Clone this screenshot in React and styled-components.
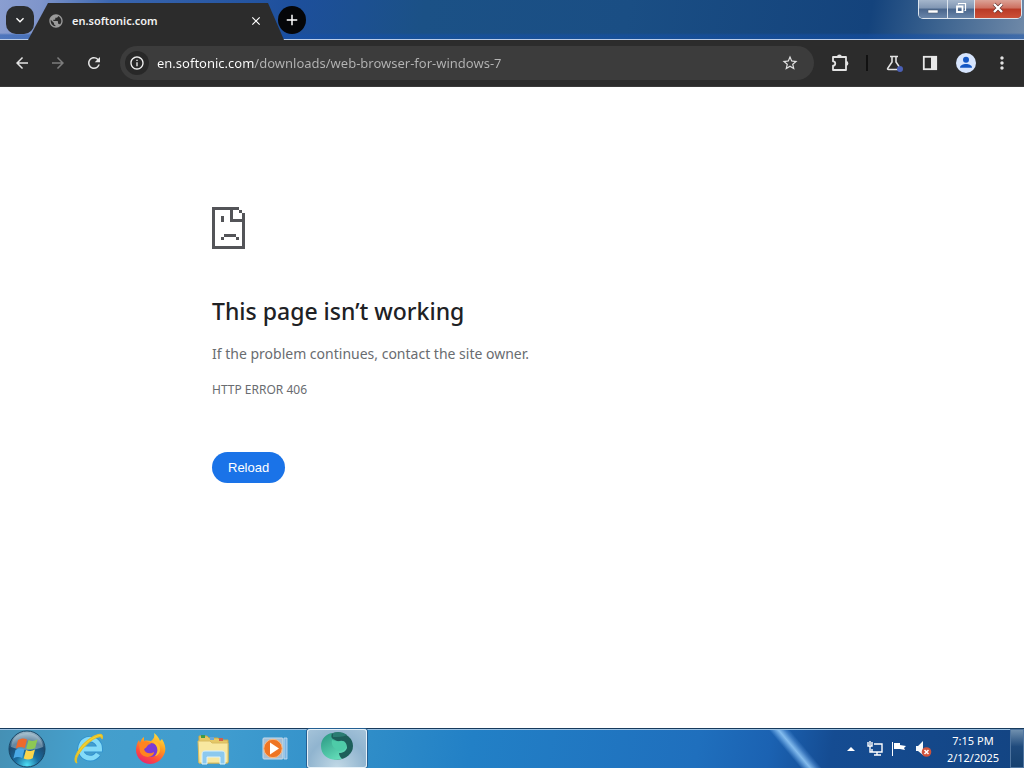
import React from "react";
import styled, { createGlobalStyle } from "styled-components";
import {
  MdArrowBack,
  MdArrowForward,
  MdRefresh,
  MdInfoOutline,
  MdStarBorder,
  MdMoreVert,
  MdClose,
  MdAdd,
  MdKeyboardArrowDown,
  MdPublic,
} from "react-icons/md";

const uiFont = '"Noto Sans", "Open Sans", sans-serif';

const GlobalStyle = createGlobalStyle`
  *, *::before, *::after { box-sizing: border-box; }
  body { margin: 0; font-family: ${uiFont}; }
  button { font: inherit; border: 0; padding: 0; cursor: pointer; }
  svg { display: block; flex: none; }
`;

const Screen = styled.div`
  min-height: 100vh;
  display: flex;
  flex-direction: column;
  background: #fff;
`;

const TitleBar = styled.header`
  display: flex;
  align-items: flex-start;
  height: 40px;
  background:
    linear-gradient(#b9cce8, #b9cce8) bottom / 100% 1px no-repeat,
    linear-gradient(to bottom, transparent 33px, rgba(20, 80, 170, 0.5) 35px),
    linear-gradient(100deg, #8a9ed0 0, #7f95cb 40px, #3a66b0 110px, #1d4f9c 290px, #1b5186 420px, #1a4e84 620px, #14437c 860px, #3d6490 930px, #6f89a8 100%);
`;

const TabSearch = styled.button`
  display: grid;
  place-items: center;
  width: 28px;
  height: 28px;
  margin: 6px 0 0 6px;
  border-radius: 10px;
  background: #2b2d2f;
  color: #fff;
`;

const Tab = styled.div`
  display: flex;
  align-items: center;
  gap: 8px;
  width: 256px;
  height: 37px;
  margin: 3px 0 0 -6px;
  padding: 0 20px 2px;
  background: #2c2c2c;
  color: #f2f2f2;
  font-size: 11px;
  font-weight: 600;
  line-height: 16px;
  clip-path: polygon(20px 0, 240px 0, 256px 100%, 0 100%);
`;

const TabTitle = styled.span`
  flex: 1;
`;

const TabClose = styled.button`
  display: grid;
  place-items: center;
  width: 16px;
  height: 16px;
  background: none;
  color: #fff;
`;

const NewTab = styled.button`
  display: grid;
  place-items: center;
  width: 28px;
  height: 28px;
  margin: 6px 0 0 -6px;
  border-radius: 50%;
  background: #050608;
  color: #fff;
`;

const WindowControls = styled.div`
  display: flex;
  margin: 0 2px 0 auto;
  height: 19px;
  border: 1px solid #dde5ee;
  border-top: 0;
  border-radius: 0 0 5px 5px;
  overflow: hidden;
`;

const WindowButton = styled.button`
  display: grid;
  place-items: center;
  width: ${(p) => p.$width}px;
  padding-bottom: 2px;
  background: ${(p) =>
    p.$close
      ? "linear-gradient(#dca296 0, #cd6f5f 45%, #b93a26 50%, #cc5038 100%)"
      : "linear-gradient(#a5b6cc 0, #8096b3 45%, #49658c 50%, #6a86aa 100%)"};

  & + & {
    border-left: 1px solid #dde5ee;
  }
`;

const Toolbar = styled.nav`
  display: flex;
  align-items: center;
  height: 47px;
  padding: 0 4px;
  background: #2c2c2c;
  border-bottom: 1px solid #3a3a3a;
  color: #e3e3e3;
`;

const ToolButton = styled.button`
  display: grid;
  place-items: center;
  width: 36px;
  height: 34px;
  background: none;
  color: ${(p) => (p.disabled ? "#7c7c7c" : "inherit")};
`;

const Omnibox = styled.form`
  display: flex;
  align-items: center;
  flex: 1;
  height: 34px;
  margin: 0 8px;
  padding: 0 6px 0 5px;
  border-radius: 17px;
  background: #3c3c3c;
`;

const SiteInfo = styled.button`
  display: grid;
  place-items: center;
  width: 24px;
  height: 24px;
  border-radius: 50%;
  background: #282828;
  color: #f1f1f1;
`;

const Address = styled.input`
  flex: 1;
  min-width: 0;
  height: 24px;
  margin-left: 8px;
  padding: 0;
  border: 0;
  outline: 0;
  font-family: ${uiFont};
  font-size: 13px;
  background: linear-gradient(90deg, #fff 97px, #b4b4b4 97px);
  background-clip: text;
  color: transparent;
`;

const ToolDivider = styled.span`
  width: 2px;
  height: 16px;
  margin: 0 8px;
  background: #111;
`;

const Page = styled.main`
  flex: 1;
  padding: 120px 24px 40px;
`;

const ErrorBox = styled.section`
  max-width: 600px;
  margin: 0 auto;
`;

const Heading = styled.h1`
  margin: 46px 0 16px;
  font-size: 23px;
  font-weight: 500;
  line-height: 32px;
  color: #202124;
`;

const Message = styled.p`
  margin: 0 0 15px;
  font-size: 14px;
  line-height: 22px;
  color: #696c70;
`;

const ErrorCode = styled.div`
  font-size: 12px;
  line-height: 20px;
  color: #696c70;
`;

const Reload = styled.button`
  height: 31px;
  margin-top: 52px;
  padding: 0 16px;
  border-radius: 16px;
  background: #1a73e8;
  color: #fff;
  && {
    font: 500 13px/20px "Liberation Sans", Arial, sans-serif;
  }
`;

const Taskbar = styled.footer`
  display: flex;
  align-items: stretch;
  height: 40px;
  border-top: 1px solid #173a5c;
  color: #fff;
  background:
    linear-gradient(#9dc3e4, #9dc3e4) top / 100% 1px no-repeat,
    linear-gradient(50deg, transparent 40%, rgba(130, 190, 245, 0.5) 45%, rgba(150, 205, 250, 0.85) 50%, rgba(110, 170, 235, 0.4) 57%, transparent 62%) right 198px top / 64px 100% no-repeat,
    linear-gradient(100deg, #4590b4 0, #459fcc 8%, #3f9ccf 22%, #2f8dc8 36%, #2280c6 46%, #1f6fbd 68%, #1b62b2 75%, #154c92 81%, #134482 100%);
`;

const TaskButton = styled.button`
  display: grid;
  place-items: center;
  width: ${(p) => (p.$start ? 54 : 60)}px;
  margin-right: ${(p) => (p.$start ? 5 : 2)}px;
  padding-bottom: ${(p) => (p.$active ? 4 : 0)}px;
  border-radius: 3px;
  background: ${(p) =>
    p.$active
      ? "radial-gradient(circle at 50% 100%, #c2d9e6, #90b4cf 60%, #a6c4da)"
      : "none"};
  box-shadow: ${(p) =>
    p.$active ? "inset 0 0 0 1px #e6f1f8, 0 0 0 1px #245f92" : "none"};
`;

const Tray = styled.div`
  display: flex;
  align-items: center;
  margin-left: auto;
`;

const TrayButton = styled.button`
  display: grid;
  place-items: center;
  width: 24px;
  height: 24px;
  background: none;
`;

const Clock = styled.time`
  display: flex;
  flex-direction: column;
  width: 75px;
  padding-left: 1px;
  font-size: 11px;
  line-height: 17px;
  text-align: center;
`;

const ShowDesktop = styled.button`
  width: 14px;
  align-self: stretch;
  background: linear-gradient(#6f8fae, #1f4a7c 45%, #16406f);
  && {
    border: 1px solid #4f75a0;
  }
`;

const Puzzle = () => (
  <svg width="20" height="20" viewBox="0 0 20 20">
    <path d="M3 4h13v13H3v-4.300c3 0 3-4.400 0-4.400z" fill="none" stroke="#e3e3e3" strokeWidth="1.800" strokeLinejoin="round" />
    <path d="M7 4a2.400 2.400 0 0 1 4.800 0zM16 8a2.400 2.400 0 0 1 0 4.800z" fill="#e3e3e3" />
  </svg>
);

const Flask = () => (
  <svg width="20" height="20" viewBox="0 0 20 20">
    <path d="M6 3.500h8M8 4v5L3.700 15.300c-.4.7 0 1.200.7 1.200h11.200c.7 0 1.100-.5.7-1.200L12 9V4" fill="none" stroke="#e3e3e3" strokeWidth="1.600" />
    <circle cx="16" cy="16" r="3" fill="#4a5fb5" />
  </svg>
);

const SidePanel = () => (
  <svg width="16" height="16" viewBox="0 0 16 16">
    <rect x="1.800" y="1.800" width="12.400" height="12.400" fill="none" stroke="#e8e8e8" strokeWidth="1.800" />
    <path d="M9 2h5v12H9z" fill="#e8e8e8" />
  </svg>
);

const Avatar = () => (
  <svg width="20" height="20" viewBox="0 0 20 20">
    <circle cx="10" cy="10" r="10" fill="#d7e5fd" />
    <circle cx="10" cy="6.800" r="3" fill="#1457c4" />
    <path d="M4 14.800c0-5 12-5 12 0z" fill="#1457c4" />
  </svg>
);

const SadPage = () => (
  <svg width="33" height="42" viewBox="0 0 11 14" fill="#535458" shapeRendering="crispEdges" aria-hidden="true">
    <path d="M0 0h9v1H1v12h9V5H6V1h1v3h3V2h1v12H0zM9 1h1v1H9zM3 3h1v2H3zM4 9h4v1H4zM3 10h1v1H3zM8 10h1v1H8z" />
  </svg>
);

const StartOrb = () => (
  <svg width="38" height="38" viewBox="0 0 38 38">
    <defs>
      <radialGradient id="orb" cx=".5" cy=".95" r=".95">
        <stop offset="0" stopColor="#4fe0f5" />
        <stop offset=".35" stopColor="#1a6c9f" />
        <stop offset=".7" stopColor="#1d4a70" />
        <stop offset="1" stopColor="#a8c3d2" />
      </radialGradient>
    </defs>
    <circle cx="19" cy="19" r="18" fill="url(#orb)" stroke="#194665" />
    <path d="M3 17C4 6 12 3 19 3s15 4 16 14c-9 4-22 4-32 0z" fill="#d9e9ef" opacity=".38" />
    <path d="M10 10c3.500-2 6-2 9-.6l-2.200 8.500c-3.300-1.400-6-1.200-9 .5z" fill="#ed692c" />
    <path d="M20.500 10c3.500 1.400 6 1.200 9-.7l-2.300 8.700c-3.300 1.700-6 1.700-9 .4z" fill="#8dc854" />
    <path d="M7.500 20c3.400-1.700 6-1.800 9-.5l-2.300 8.400c-3.300-1.300-6-1.200-8.800.5z" fill="#4aa9e6" />
    <path d="M18 20c3.400 1.400 6 1.200 9-.5l-2.300 8.700c-3.300 1.700-6 1.600-9 .3z" fill="#fbd54b" />
  </svg>
);

const Explorer = () => (
  <svg width="34" height="34" viewBox="0 0 34 34">
    <path d="M26 22a9.500 9.500 0 1 1 1.600-5H11" fill="none" stroke="#2f91cf" strokeWidth="6.400" />
    <path d="M26 22a9.500 9.500 0 1 1 1.600-5H11" fill="none" stroke="#83dbf8" strokeWidth="4.800" />
    <path d="M5 31C-1 28 8 13 19 6c8-5 13-5 11 1 0-5-8-1-14 4C8 18 2 27 5 31z" fill="#f6d431" stroke="#e2c02a" strokeWidth="1.200" />
  </svg>
);

const Firefox = () => (
  <svg width="34" height="34" viewBox="0 0 34 34">
    <defs>
      <linearGradient id="fox" x1=".8" y1="0" x2=".3" y2="1">
        <stop offset="0" stopColor="#ffe744" />
        <stop offset=".4" stopColor="#ff9b20" />
        <stop offset=".75" stopColor="#ff4a3c" />
        <stop offset="1" stopColor="#e52770" />
      </linearGradient>
    </defs>
    <path d="M20 1c3 2 5 5 6 8l2-2c3 5 4 9 3 13-2 7-8 12-15 12S2 26 2 18c0-4 1-7 3-10l1 3c1-3 2-5 4-6v4c3-1 5 0 7 0 3-2 4-5 3-8z" fill="url(#fox)" />
    <circle cx="17" cy="18" r="7" fill="#7b3bd4" />
    <path d="M5 12c4-4 10-3 12 0-4 0-3 3-7 5 1 5 7 5 10 3 0 6-11 7-14 0z" fill="#ff8420" />
    <path d="M18 9c5 0 9 4 8 10-1 3-3 5-5 5 4-5 3-10-3-15z" fill="#ffbd2e" />
  </svg>
);

const Folder = () => (
  <svg width="34" height="34" viewBox="0 0 34 34">
    <path d="M3 4h8l2 2h9l2 2h8v23H3z" fill="#e6c866" stroke="#c8a949" />
    <path d="M5 3h4v3H5z" fill="#3d9a49" />
    <path d="M14 5h4v3h-4z" fill="#6aa8d8" />
    <path d="M23 6h4v3h-4z" fill="#d15f4a" />
    <path d="M2 9h12l2 2h16v19l-2 1H3z" fill="#f8e8a0" stroke="#d7bc62" />
    <path d="M6 32V22c0-2 1-3 3-3h17c2 0 3 1 3 3v10h-5v-7H11v7z" fill="#8cc9ee" stroke="#d9f1fc" />
  </svg>
);

const MediaPlayer = () => (
  <svg width="28" height="28" viewBox="0 0 28 28">
    <path d="M23 3h3v21h-3z" fill="#7db6e4" stroke="#c6e0f3" strokeWidth=".8" />
    <rect x="2" y="3" width="20" height="21" rx="1" fill="#a5bfd6" stroke="#c8dcea" />
    <circle cx="12" cy="13.500" r="9.200" fill="#ee7524" stroke="#f9ba82" />
    <path d="M9 7.500l9 6-9 6z" fill="#fff" />
  </svg>
);

const GreenGlobe = () => (
  <svg width="34" height="32" viewBox="0 0 34 32">
    <defs>
      <linearGradient id="swirl" x1="0" y1="0" x2=".6" y2="1">
        <stop offset="0" stopColor="#279480" />
        <stop offset="1" stopColor="#63dcb8" />
      </linearGradient>
    </defs>
    <ellipse cx="17.500" cy="15" rx="15.500" ry="13.500" fill="#1d5f5a" />
    <path d="M1 15C1 8 6 3 12 2c-1 3-1 5 1 6 3 1 4 3 7 2 5-1 7 3 7 7-1 3-4 5-8 5 0 2 1 4 3 6C10 31 1 25 1 15z" fill="url(#swirl)" />
    <path d="M12 9c-1 4 1 8 6 11 4 0 7-1 8-4 0-4-2-6-5-6-3 1-6 0-9-1z" fill="#4ecba8" />
    <path d="M13 2c5-2 10-1 14 2-4 2-9 2-14 2z" fill="#2a7c72" />
  </svg>
);

const Network = () => (
  <svg width="18" height="16" viewBox="0 0 18 16" fill="none" stroke="#fff" strokeWidth="1.400">
    <path d="M8 3h8v8H6V8M11 11v3M8 14h7M2 1v4h4V1M4 0v4M4 5v6h2" />
  </svg>
);

const ActionFlag = () => (
  <svg width="16" height="16" viewBox="0 0 16 16" fill="#fff">
    <path d="M1 1h1v14H1zM3 2h6v2l6 1-2 2 1 2-5-1H3z" />
  </svg>
);

const Muted = () => (
  <svg width="18" height="18" viewBox="0 0 18 18">
    <path d="M2 6h2l5-5v14l-5-4H2z" fill="#f5f8fb" />
    <circle cx="12.500" cy="12" r="4.800" fill="#d0533c" />
    <path d="M10.500 10l4 4M14.500 10l-4 4" stroke="#fff" strokeWidth="1.500" />
  </svg>
);

const tasks = [
  { label: "Internet Explorer", Icon: Explorer },
  { label: "Firefox", Icon: Firefox },
  { label: "File Explorer", Icon: Folder },
  { label: "Media Player", Icon: MediaPlayer },
  { label: "Web browser", Icon: GreenGlobe, active: true },
];

export default function App() {
  return (
    <Screen>
      <GlobalStyle />
      <TitleBar>
        <TabSearch aria-label="Search tabs"><MdKeyboardArrowDown size={16} /></TabSearch>
        <Tab>
          <MdPublic size={16} color="#9b9b9b" />
          <TabTitle>en.softonic.com</TabTitle>
          <TabClose aria-label="Close tab"><MdClose size={14} /></TabClose>
        </Tab>
        <NewTab aria-label="New tab"><MdAdd size={18} /></NewTab>
        <WindowControls>
          <WindowButton $width={28} aria-label="Minimize">
            <svg width="12" height="12" viewBox="0 0 12 12"><path d="M1 8h10v3H1z" fill="#fff" stroke="#53617a" strokeWidth=".6" /></svg>
          </WindowButton>
          <WindowButton $width={27} aria-label="Restore">
            <svg width="12" height="12" viewBox="0 0 12 12" fill="none" stroke="#fff">
              <path d="M3.500 2.500v-1h7v7h-1" strokeWidth="1.200" />
              <path d="M2 4.500h5.500v5.500H2z" strokeWidth="1.800" />
            </svg>
          </WindowButton>
          <WindowButton $width={47} $close aria-label="Close window">
            <svg width="12" height="12" viewBox="0 0 12 12"><path d="M2 2l8 8M10 2l-8 8" stroke="#5f2f2b" strokeWidth="3.600" /><path d="M2 2l8 8M10 2l-8 8" stroke="#fff" strokeWidth="2.400" /></svg>
          </WindowButton>
        </WindowControls>
      </TitleBar>

      <Toolbar aria-label="Browser toolbar">
        <ToolButton aria-label="Back"><MdArrowBack size={18} /></ToolButton>
        <ToolButton aria-label="Forward" disabled><MdArrowForward size={18} /></ToolButton>
        <ToolButton aria-label="Reload page"><MdRefresh size={18} /></ToolButton>
        <Omnibox onSubmit={(e) => e.preventDefault()}>
          <SiteInfo type="button" aria-label="Site information"><MdInfoOutline size={16} /></SiteInfo>
          <Address aria-label="Address" spellCheck={false} defaultValue="en.softonic.com/downloads/web-browser-for-windows-7" />
          <ToolButton type="button" aria-label="Bookmark"><MdStarBorder size={18} /></ToolButton>
        </Omnibox>
        <ToolButton aria-label="Extensions"><Puzzle /></ToolButton>
        <ToolDivider />
        <ToolButton aria-label="Experiments"><Flask /></ToolButton>
        <ToolButton aria-label="Side panel"><SidePanel /></ToolButton>
        <ToolButton aria-label="Profile"><Avatar /></ToolButton>
        <ToolButton aria-label="Menu"><MdMoreVert size={20} /></ToolButton>
      </Toolbar>

      <Page>
        <ErrorBox>
          <SadPage />
          <Heading>This page isn’t working</Heading>
          <Message>If the problem continues, contact the site owner.</Message>
          <ErrorCode>HTTP ERROR 406</ErrorCode>
          <Reload>Reload</Reload>
        </ErrorBox>
      </Page>

      <Taskbar>
        <TaskButton $start aria-label="Start"><StartOrb /></TaskButton>
        {tasks.map(({ label, Icon, active }) => (
          <TaskButton key={label} $active={active} aria-label={label}><Icon /></TaskButton>
        ))}
        <Tray>
          <TrayButton aria-label="Show hidden icons">
            <svg width="8" height="4" viewBox="0 0 8 4"><path d="M0 4l4-4 4 4z" fill="#fff" /></svg>
          </TrayButton>
          <TrayButton aria-label="Network"><Network /></TrayButton>
          <TrayButton aria-label="Action center"><ActionFlag /></TrayButton>
          <TrayButton aria-label="Volume"><Muted /></TrayButton>
          <Clock>
            <span>7:15 PM</span>
            <span>2/12/2025</span>
          </Clock>
          <ShowDesktop aria-label="Show desktop" />
        </Tray>
      </Taskbar>
    </Screen>
  );
}
